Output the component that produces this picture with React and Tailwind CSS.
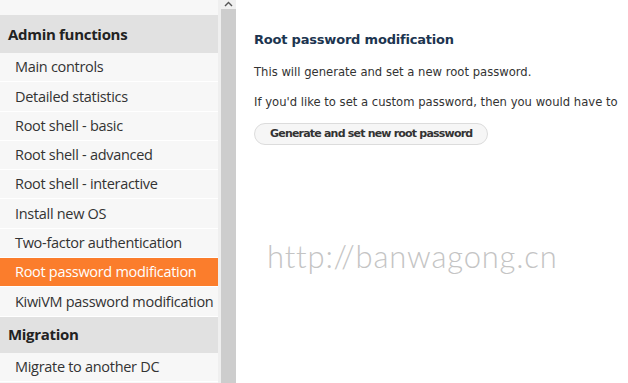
const items = [
  'Main controls',
  'Detailed statistics',
  'Root shell - basic',
  'Root shell - advanced',
  'Root shell - interactive',
  'Install new OS',
  'Two-factor authentication',
  'Root password modification',
  'KiwiVM password modification',
]

function NavItem({ label, active }) {
  return (
    <div
      className={`h-[29.3px] flex items-center pl-[15px] border-b border-white text-[14.5px] whitespace-nowrap ${
        active ? 'bg-[#fb7d2c] text-white' : 'bg-[#f7f7f7] text-[#333]'
      }`}
    >
      {label}
    </div>
  )
}

function Sidebar() {
  return (
    <div className="flex h-full shrink-0">
      <div className="w-[218px] flex flex-col font-['Open_Sans',sans-serif] tracking-[-0.3px]">
        <div className="h-[15px] bg-[#f7f7f7]" />
        <div className="h-[38px] flex items-center pl-[8px] bg-[#e1e1e1] text-[15px] font-bold text-[#222]">
          Admin functions
        </div>
        {items.map(label => (
          <NavItem key={label} label={label} active={label === 'Root password modification'} />
        ))}
        <div className="h-[36px] flex items-center pl-[8px] bg-[#e1e1e1] text-[15px] font-bold text-[#222]">
          Migration
        </div>
        <NavItem label="Migrate to another DC" />
        <div className="flex-1 bg-[#f7f7f7]" />
      </div>
      <div className="w-[3px] bg-[#efefef]" />
      <div className="w-[15px] flex flex-col bg-[#cdcdcd]">
        <div className="h-[9px] bg-[#f0f0f0] flex items-start justify-center">
          <svg width="9" height="6" viewBox="0 0 9 6" className="mt-[1px]">
            <path d="M1 5 L4.5 1.5 L8 5" fill="none" stroke="#555" strokeWidth="1.4" />
          </svg>
        </div>
      </div>
    </div>
  )
}

export default function App() {
  return (
    <div className="relative w-[628px] h-[383px] overflow-hidden bg-white flex">
      <Sidebar />
      <div className="flex-1 min-w-0 pl-[18px] pt-[31px] font-['DejaVu_Sans',Verdana,sans-serif] text-[#333] whitespace-nowrap overflow-hidden">
        <h2 className="text-[13px] font-bold text-[#1c3550] leading-[18px] tracking-[-0.2px]">Root password modification</h2>
        <p className="mt-[16px] text-[11.6px] leading-[14px]">This will generate and set a new root password.</p>
        <p className="mt-[16px] text-[11.6px] leading-[14px]">
          If you'd like to set a custom password, then you would have to
        </p>
        <button className="mt-[14px] h-[22px] px-[15px] rounded-full border border-[#dcdcdc] bg-[#f6f6f6] text-[11px] font-bold text-[#333] tracking-[-0.8px]">
          Generate and set new root password
        </button>
      </div>
      <div className="absolute left-[267px] top-[233px] font-['Lato',sans-serif] font-light text-[31px] text-[#c4c4c4] tracking-[0.8px] pointer-events-none">
        http://banwagong.cn
      </div>
    </div>
  )
}
